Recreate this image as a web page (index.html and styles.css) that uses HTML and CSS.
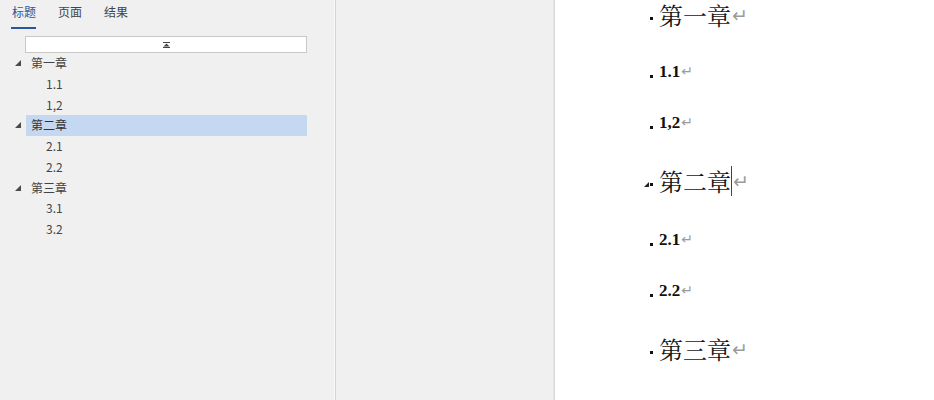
FILE: index.html
```html
<!DOCTYPE html>
<html lang="zh-CN">
  <head>
    <meta charset="utf-8" />
    <title>导航窗格</title>
    <link rel="stylesheet" href="styles.css">
  </head>
  <body>
    <div class="nav">
      <div class="tabs">
        <span class="tab active">标题</span>
        <span class="tab">页面</span>
        <span class="tab">结果</span>
      </div>

      <div class="search">
        <svg width="7" height="6" viewBox="0 0 7 6">
          <rect x="0" y="0" width="7" height="1" fill="#444"/>
          <polygon points="3.5,1.5 6.5,4.5 0.5,4.5" fill="#444"/>
          <rect x="0" y="5" width="7" height="1" fill="#444"/>
        </svg>
      </div>

      <div class="tree">
        <div class="row"><span class="toggle"><i class="tri"></i></span><span class="label">第一章</span></div>
        <div class="row sub"><span class="toggle"></span><span class="label">1.1</span></div>
        <div class="row sub"><span class="toggle"></span><span class="label">1,2</span></div>
        <div class="row selected"><span class="toggle"><i class="tri"></i></span><span class="label">第二章</span></div>
        <div class="row sub"><span class="toggle"></span><span class="label">2.1</span></div>
        <div class="row sub"><span class="toggle"></span><span class="label">2.2</span></div>
        <div class="row"><span class="toggle"><i class="tri"></i></span><span class="label">第三章</span></div>
        <div class="row sub"><span class="toggle"></span><span class="label">3.1</span></div>
        <div class="row sub"><span class="toggle"></span><span class="label">3.2</span></div>
      </div>
    </div>

    <div class="gutter"></div>

    <div class="doc">
      <div class="para h1"><span class="mark"></span><span class="text">第一章</span><span class="ret">↵</span></div>
      <div class="para h2"><span class="mark"></span><span class="text">1.1</span><span class="ret">↵</span></div>
      <div class="para h2"><span class="mark"></span><span class="text">1,2</span><span class="ret">↵</span></div>
      <div class="para h1"><span class="fold"></span><span class="mark"></span><span class="text">第二章</span><span class="caret"></span><span class="ret">↵</span></div>
      <div class="para h2"><span class="mark"></span><span class="text">2.1</span><span class="ret">↵</span></div>
      <div class="para h2"><span class="mark"></span><span class="text">2.2</span><span class="ret">↵</span></div>
      <div class="para h1"><span class="mark"></span><span class="text">第三章</span><span class="ret">↵</span></div>
    </div>
  </body>
</html>
```

FILE: styles.css
```css
body {
  margin: 0;
  padding: 0;
  height: 400px;
  overflow: hidden;
  display: flex;
  font-family: "Noto Sans CJK SC", "Noto Sans", sans-serif;
}

/* navigation pane */

.nav {
  width: 335px;
  flex: none;
  background-color: #f0f0f0;
  border-right: 1px solid #d4d4d4;
  box-shadow: inset -1px 0 0 #fafafa;
}

.tabs {
  display: flex;
  gap: 22px;
  padding: 3px 0 0 12px;
  height: 27px;
  box-sizing: border-box;
}

.tab {
  font-size: 12px;
  line-height: 18px;
  color: #444;
  height: 24px;
}

.tab.active {
  color: #2b579a;
  border-bottom: 2px solid #2b579a;
  margin-left: -1px;
  padding-left: 1px;
}

.search {
  margin: 9px 28px 0 25px;
  height: 17px;
  box-sizing: border-box;
  background-color: #fff;
  border: 1px solid #c8c8c8;
  display: flex;
  align-items: center;
  justify-content: center;
}

.row {
  display: flex;
  height: 20.75px;
  font-size: 12px;
  color: #444;
}

.toggle {
  width: 26px;
  flex: none;
  position: relative;
}

.tri {
  position: absolute;
  left: 15px;
  top: 7px;
  width: 0;
  height: 0;
  border-left: 6px solid transparent;
  border-bottom: 6px solid #4a4a4a;
}

.label {
  flex: 1;
  margin-right: 28px;
  padding-left: 5px;
  line-height: 20.75px;
}

.sub .label {
  padding-left: 20px;
}

.selected .label {
  background-color: #c5d8f2;
  color: #333;
}

/* empty area between pane and page */

.gutter {
  width: 218px;
  flex: none;
  background-color: #f0f0f0;
  border-right: 1px solid #d9d9d9;
  box-shadow: inset -1px 0 0 #e6e6e6;
}

/* document page */

.doc {
  flex: 1;
  background-color: #fff;
  padding-left: 95px;
  padding-top: 2px;
}

.para {
  display: flex;
  align-items: center;
}

.mark {
  width: 3px;
  height: 3px;
  background-color: #111;
  margin-right: 6px;
  flex: none;
}

.h1 {
  height: 26px;
  margin-top: 35px;
}

.h1:first-child {
  margin-top: 0;
}

.h1 .text {
  font-family: "Noto Serif CJK SC", "Noto Sans CJK SC", serif;
  font-size: 24px;
  line-height: 26px;
  color: #151515;
}

.h1 .mark {
  margin-top: 6px;
}

.h2 {
  height: 20px;
  margin-top: 36px;
}

.h1:first-child + .h2 {
  margin-top: 34px;
}

.h2 + .h2 {
  margin-top: 31px;
}

.h2 .text {
  font-family: "Liberation Serif", serif;
  font-weight: bold;
  font-size: 17px;
  line-height: 20px;
  color: #111;
}

.h2 .mark {
  margin-top: 9px;
}

.ret {
  font-family: "DejaVu Sans", sans-serif;
  color: #9a9a9a;
  margin-left: 1px;
  line-height: 20px;
}

.h1 .ret {
  font-size: 19px;
}

.h2 .ret {
  font-size: 14px;
  margin-top: -2px;
}

.fold {
  width: 0;
  height: 0;
  border-left: 5px solid transparent;
  border-bottom: 5px solid #222;
  margin-left: -6px;
  margin-right: 1px;
  margin-top: 6px;
}

.caret {
  width: 1px;
  height: 30px;
  background-color: #444;
  flex: none;
}
```
